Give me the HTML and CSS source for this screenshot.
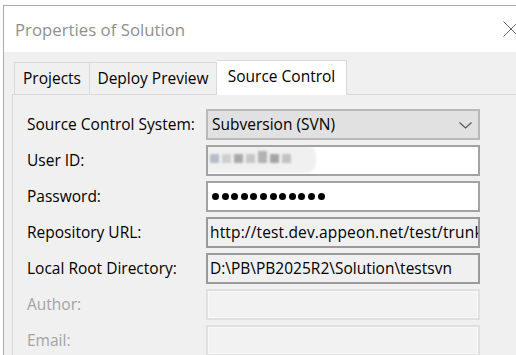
FILE: index.html
```html
<!DOCTYPE html>
<html>
<head>
<meta charset="utf-8">
<link rel="stylesheet" href="styles.css">
</head>
<body>
<div class="window">
  <div class="titlebar">
    <span class="title">Properties of Solution</span>
    <svg class="close" width="16" height="16" viewBox="0 0 16 16"><path d="M0.5 0.5 L15.5 15.5 M15.5 0.5 L0.5 15.5" stroke="#666" stroke-width="1" fill="none"/></svg>
  </div>
  <div class="content">
    <div class="tabs">
      <div class="tab t-projects">Projects</div>
      <div class="tab t-deploy">Deploy Preview</div>
      <div class="tab t-source active">Source Control</div>
    </div>
    <div class="panel">
      <div class="form">
        <div class="label">Source Control System:</div>
        <div class="field combo">
          <span class="value">Subversion (SVN)</span>
          <svg class="chev" width="13" height="7" viewBox="0 0 13 7"><path d="M0.5 0.5 L6.5 6 L12.5 0.5" stroke="#555" stroke-width="1.2" fill="none"/></svg>
        </div>

        <div class="label">User ID:</div>
        <div class="field edit">
          <div class="smudge">
            <span class="haze"></span>
            <span class="px p1"></span><span class="px p2"></span><span class="px p3"></span><span class="px p4"></span><span class="px p5"></span><span class="px p6"></span><span class="px p7"></span>
          </div>
        </div>

        <div class="label">Password:</div>
        <div class="field edit">
          <div class="dots">
            <span></span><span></span><span></span><span></span><span></span><span></span><span></span><span></span><span></span><span></span><span></span><span></span>
          </div>
        </div>

        <div class="label">Repository URL:</div>
        <div class="field readonly"><span class="value url">http://test.dev.appeon.net/test/trunk</span></div>

        <div class="label">Local Root Directory:</div>
        <div class="field readonly"><span class="value">D:\PB\PB2025R2\Solution\testsvn</span></div>

        <div class="label disabled">Author:</div>
        <div class="field off"></div>

        <div class="label disabled">Email:</div>
        <div class="field off"></div>
      </div>
    </div>
  </div>
</div>
</body>
</html>
```

FILE: styles.css
```css
html, body {
  margin: 0;
  padding: 0;
  background: #ffffff;
  overflow: hidden;
  width: 516px;
  height: 355px;
}
body {
  font-family: "Open Sans", "Noto Sans", "DejaVu Sans", sans-serif;
  color: #000;
}
.window {
  margin-top: 5px;
  margin-left: 3px;
  width: 519px;
  border-top: 1px solid #ababab;
  border-left: 1px solid #ababab;
  display: flex;
  flex-direction: column;
}
.titlebar {
  flex-shrink: 0;
  height: 46px;
  background: #fff;
  display: flex;
  justify-content: space-between;
  align-items: flex-start;
  padding: 12px 0 0 11px;
  box-sizing: border-box;
}
.title {
  font-size: 16.8px;
  line-height: 23px;
  color: #8f8f8f;
}
.close {
  margin-top: 3px;
  margin-right: 4px;
}
.content {
  background: #f0f0f0;
  padding: 8px 0 0 8px;
}
.tabs {
  display: flex;
  align-items: flex-end;
  padding-left: 2px;
  height: 34px;
  position: relative;
  z-index: 1;
}
.tab {
  box-sizing: border-box;
  height: 32px;
  border: 1px solid #d9d9d9;
  border-bottom: none;
  font-size: 15.5px;
  line-height: 31px;
  text-align: center;
  color: #000;
  background: #f0f0f0;
}
.t-projects { width: 75px; border-right: none; }
.t-deploy { width: 128px; }
.t-source { width: 130px; }
.tab.active {
  height: 35px;
  margin-bottom: -1px;
  background: #fff;
  border-left: none;
  line-height: 31px;
  padding-bottom: 3px;
}
.panel {
  border: 1px solid #d9d9d9;
  border-right: none;
  border-bottom: none;
  height: 280px;
  padding: 14px 0 0 14px;
  box-sizing: border-box;
}
.form {
  display: grid;
  grid-template-columns: 179px 274px;
  grid-auto-rows: 31px;
  row-gap: 5px;
}
.label {
  font-size: 15.5px;
  line-height: 31px;
  color: #000;
  white-space: nowrap;
}
.label.disabled {
  color: #a3a3a3;
}
.field {
  box-sizing: border-box;
  display: flex;
  align-items: center;
  position: relative;
  overflow: hidden;
  font-size: 15.5px;
  padding-left: 4px;
}
.value {
  white-space: nowrap;
  line-height: 27px;
}
.url {
  letter-spacing: 0.15px;
}
.combo {
  background: #e1e1e1;
  border: 2px solid #b9b9b9;
  justify-content: space-between;
  padding-left: 4px;
  padding-right: 6px;
}
.chev {
  margin-top: 1px;
}
.edit {
  background: #fff;
  border: 2px solid #a3a3a3;
}
.readonly {
  background: #f0f0f0;
  border: 2px solid #9a9a9a;
  padding-left: 2px;
}
.off {
  background: #f2f2f2;
  border: 2px solid #e0e0e0;
  box-shadow: inset 0 0 0 1px #f8f8f8;
}
.dots {
  display: flex;
  gap: 2.6px;
  padding-left: 0;
}
.dots span {
  width: 7px;
  height: 7px;
  border-radius: 50%;
  background: #000;
}
.smudge {
  position: absolute;
  left: -8px;
  top: -6px;
  width: 120px;
  height: 36px;
  filter: blur(0.8px);
}
.haze {
  position: absolute;
  left: 0;
  top: 4px;
  width: 116px;
  height: 28px;
  border-radius: 10px;
  background: rgba(236, 236, 236, 0.8);
}
.px {
  position: absolute;
  top: 13px;
  width: 9px;
  height: 9px;
  background: #bdbdbd;
}
.p1 { left: 10px; background: #b5bbc8; }
.p2 { left: 22px; background: #cfcfcf; }
.p3 { left: 34px; background: #a9a9a9; }
.p4 { left: 46px; background: #c6c6c6; }
.p5 { left: 58px; background: #b2b2b2; top: 10px; height: 12px; }
.p6 { left: 70px; background: #a4a4a4; }
.p7 { left: 82px; background: #c2c2c2; }
```
